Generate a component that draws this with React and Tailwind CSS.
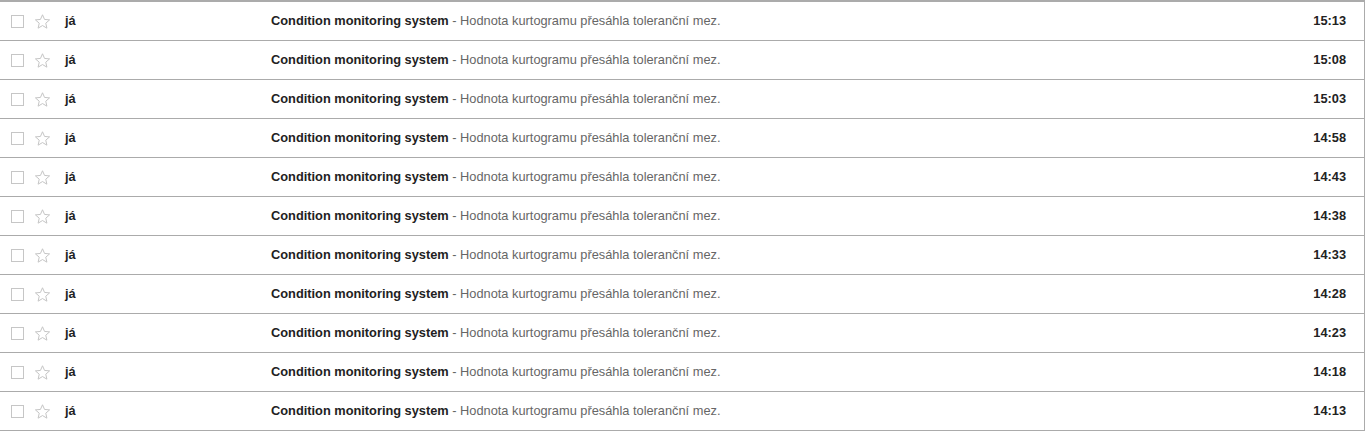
import React from "react";

const times = ["15:13","15:08","15:03","14:58","14:43","14:38","14:33","14:28","14:23","14:18","14:13"];

function Star() {
  return (
    <svg width="17" height="17" viewBox="0 0 24 24" className="shrink-0">
      <path d="M12 2.5l2.9 6.6 7.1.6-5.4 4.7 1.6 7-6.2-3.7-6.2 3.7 1.6-7L2 9.7l7.1-.6z" fill="none" stroke="#c4c4c4" strokeWidth="1.4" strokeLinejoin="miter" />
    </svg>
  );
}

export default function App() {
  return (
    <div className="w-[1365px] border-t-2 border-r border-[#ababab] bg-white" style={{ fontFamily: '"Liberation Sans", Arial, sans-serif' }}>
      {times.map((t) => (
        <div key={t} className="h-[39px] border-b border-[#ababab] flex items-center text-[12.8px] text-[#222]">
          <div className="w-[13px] h-[13px] border border-[#c6c6c6] ml-[11px] shrink-0" />
          <div className="ml-[10px]"><Star /></div>
          <div className="ml-[14px] w-[206px] font-bold shrink-0">já</div>
          <div className="flex-1 whitespace-nowrap">
            <span className="font-bold">Condition monitoring system</span>
            <span className="text-[#666]"> - Hodnota kurtogramu přesáhla toleranční mez.</span>
          </div>
          <div className="font-bold pr-[18px]">{t}</div>
        </div>
      ))}
    </div>
  );
}
